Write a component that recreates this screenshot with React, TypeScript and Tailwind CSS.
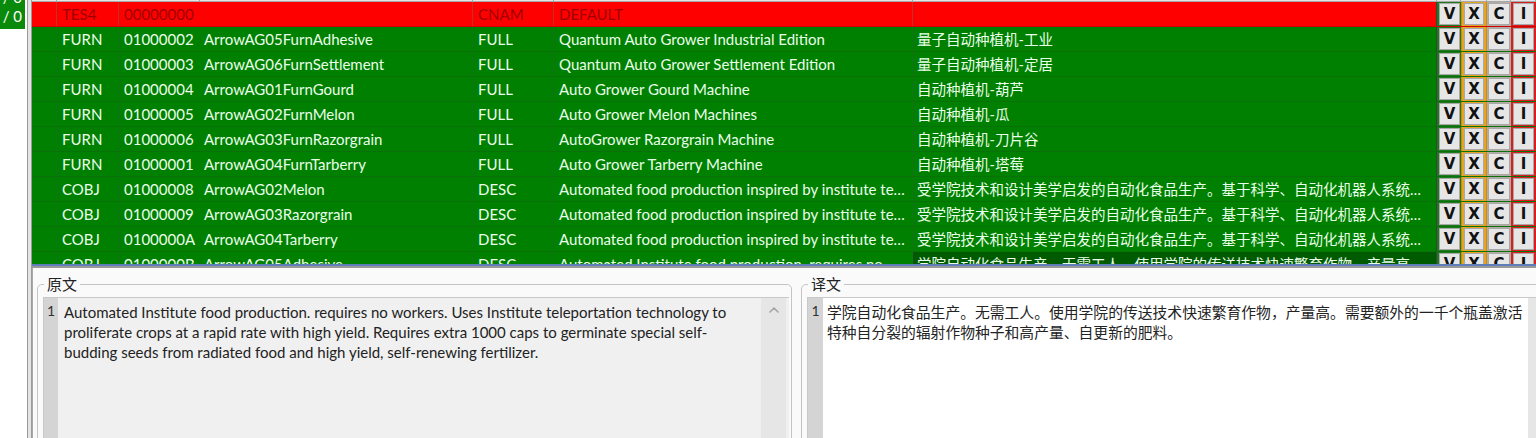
import React from "react";
import { ChevronUp } from "lucide-react";

type Row = { sig: string; fid: string; edid: string; fld: string; src: string; dst: string; red?: boolean; sel?: boolean };

const DESC_EN = "Automated food production inspired by institute technology and design aesthetics.";
const DESC_ZH = "受学院技术和设计美学启发的自动化食品生产。基于科学、自动化机器人系统和高效的生产方式。";

const rows: Row[] = [
  { sig: "TES4", fid: "00000000", edid: "", fld: "CNAM", src: "DEFAULT", dst: "", red: true },
  { sig: "FURN", fid: "01000002", edid: "ArrowAG05FurnAdhesive", fld: "FULL", src: "Quantum Auto Grower Industrial Edition", dst: "量子自动种植机-工业" },
  { sig: "FURN", fid: "01000003", edid: "ArrowAG06FurnSettlement", fld: "FULL", src: "Quantum Auto Grower Settlement Edition", dst: "量子自动种植机-定居" },
  { sig: "FURN", fid: "01000004", edid: "ArrowAG01FurnGourd", fld: "FULL", src: "Auto Grower Gourd Machine", dst: "自动种植机-葫芦" },
  { sig: "FURN", fid: "01000005", edid: "ArrowAG02FurnMelon", fld: "FULL", src: "Auto Grower Melon Machines", dst: "自动种植机-瓜" },
  { sig: "FURN", fid: "01000006", edid: "ArrowAG03FurnRazorgrain", fld: "FULL", src: "AutoGrower Razorgrain Machine", dst: "自动种植机-刀片谷" },
  { sig: "FURN", fid: "01000001", edid: "ArrowAG04FurnTarberry", fld: "FULL", src: "Auto Grower Tarberry Machine", dst: "自动种植机-塔莓" },
  { sig: "COBJ", fid: "01000008", edid: "ArrowAG02Melon", fld: "DESC", src: DESC_EN, dst: DESC_ZH },
  { sig: "COBJ", fid: "01000009", edid: "ArrowAG03Razorgrain", fld: "DESC", src: DESC_EN, dst: DESC_ZH },
  { sig: "COBJ", fid: "0100000A", edid: "ArrowAG04Tarberry", fld: "DESC", src: DESC_EN, dst: DESC_ZH },
  { sig: "COBJ", fid: "0100000B", edid: "ArrowAG05Adhesive", fld: "DESC", src: "Automated Institute food production. requires no workers. Uses Institute teleportation", dst: "学院自动化食品生产。无需工人。使用学院的传送技术快速繁育作物，产量高。需要额外的一千个瓶盖", sel: true },
];

const GRID = "grid grid-cols-[25px_62px_81px_273px_81px_359px_524px_24px_26px_24px_25px]";
const FONT = { fontFamily: "Lato, 'Noto Sans CJK SC', sans-serif" } as React.CSSProperties;

function Btn({ ch }: { ch: string }) {
  return (
    <div
      className="w-full h-full bg-[#e6e6e6] border border-[#a8a8a8] flex items-center justify-center text-[15px] font-bold text-[#111] leading-none"
      style={{ fontFamily: "'DejaVu Sans', Verdana, sans-serif" }}
    >
      {ch}
    </div>
  );
}

function TableRow({ r }: { r: Row }) {
  const bg = r.red ? "bg-[#ff0000] text-[#a00000]" : "bg-[#008000] text-[#eaffea]";
  const line = r.red ? "border-[#c03030]" : "border-[#17701a]";
  return (
    <div className={`${GRID} h-[25px] text-[15px] leading-[25px] border-b ${r.red ? "border-[#d00000]" : "border-[#0a700a]"}`}>
      <div className={`${bg} border-r ${line}`} />
      <div className={`${bg} border-r ${line} pl-[5px] truncate`}>{r.sig}</div>
      <div className={`${bg} pl-[5px] truncate`}>{r.fid}</div>
      <div className={`${bg} border-r ${line} pl-[4px] truncate`}>{r.edid}</div>
      <div className={`${bg} border-r ${line} pl-[5px] truncate`}>{r.fld}</div>
      <div className={`${bg} border-r ${line} pl-[5px] pr-[4px] truncate`}>{r.src}</div>
      <div className={`${r.sel ? "bg-[#005a00] text-[#eaffea]" : bg} border-r border-[#404040] pl-[4px] pr-[2px] truncate text-[14.5px]`}>{r.dst}</div>
      <div className="bg-[#1e7a1e] pl-[2px] pr-[1px] py-[1px]"><Btn ch="V" /></div>
      <div className="bg-[#e5a424] border-x border-[#d08a10] px-[2px] py-[1px]"><Btn ch="X" /></div>
      <div className="bg-[#b4aca4] px-[1px] py-[1px]"><Btn ch="C" /></div>
      <div className="bg-[#d81e1e] px-[2px] py-[1px]"><Btn ch="I" /></div>
    </div>
  );
}

function Header() {
  const cells = ["", "", "", "", "", "", "", "", "", "", ""];
  return (
    <div className={`${GRID} h-[25px] -mt-[23px] bg-[#e6e6e6] border-b border-[#a8a8a8]`}>
      {cells.map((_, i) => (
        <div key={i} className={i === 1 ? "" : "border-r border-[#a0a0a0]"} />
      ))}
    </div>
  );
}

export default function App() {
  return (
    <div className="w-[1536px] h-[438px] overflow-hidden bg-white flex" style={FONT}>
      {/* left strip */}
      <div className="w-[27px] shrink-0 bg-white">
        <div className="w-[25px] h-[29px] bg-[#0a8a0a] text-white text-[15px] leading-[17px] overflow-hidden flex flex-col items-end pr-[3px]">
          <div className="-mt-[11px]">/ 0</div>
          <div className="mt-[2px]">/ 0</div>
        </div>
      </div>
      {/* frame */}
      <div className="w-[5px] shrink-0 bg-[#e4e4e4] border-x border-[#9a9a9a]" />
      {/* main */}
      <div className="w-[1504px] shrink-0 flex flex-col">
        <div className="h-[264px] overflow-hidden bg-[#008000] shrink-0">
          <Header />
          {rows.map((r, i) => (
            <TableRow key={i} r={r} />
          ))}
        </div>
        <div className="h-[2px] bg-[#5c7fb8] shrink-0" />
        <div className="h-[2px] bg-[#9a9a9a] shrink-0" />
        <div className="flex-1 flex bg-[#fafafa] border-l border-[#a8a8a8] pl-[4px] pt-[7px] gap-[9px] overflow-hidden">
          {/* source */}
          <fieldset className="w-[755px] shrink-0 border border-[#c4c4c4] rounded-[5px] pl-[5px] pr-[2px] flex flex-col min-h-[200px]">
            <legend className="ml-[1px] px-[3px] text-[15px] leading-[18px] text-[#222]">原文</legend>
            <div className="mt-[4px] flex-1 flex border-t border-l border-[#c8c8c8] bg-[#f0f0f0]">
              <div className="w-[14px] bg-[#d4d4d4] text-[14px] text-[#333] text-center pt-[3px] leading-[20px]">1</div>
              <div className="flex-1 min-w-0 pl-[6px] pt-[4px] text-[15px] leading-[20px] text-[#222] whitespace-nowrap overflow-hidden">
                <div>Automated Institute food production. requires no workers. Uses Institute teleportation technology to</div>
                <div>proliferate crops at a rapid rate with high yield. Requires extra 1000 caps to germinate special self-</div>
                <div>budding seeds from radiated food and high yield, self-renewing fertilizer.</div>
              </div>
              <div className="w-[25px] shrink-0 bg-[#e6e6e6] flex justify-center pt-[4px]">
                <ChevronUp size={16} strokeWidth={2.5} className="text-[#a6a6a6]" />
              </div>
              <div className="w-[3px] shrink-0" />
            </div>
          </fieldset>
          {/* translation */}
          <fieldset className="w-[755px] shrink-0 border border-[#c4c4c4] rounded-[5px] pl-[5px] pr-[2px] flex flex-col min-h-[200px]">
            <legend className="ml-[1px] px-[3px] text-[15px] leading-[18px] text-[#222]">译文</legend>
            <div className="mt-[4px] flex-1 flex border-t border-l border-[#c8c8c8] bg-white">
              <div className="w-[15px] shrink-0 bg-[#d4d4d4] text-[14px] text-[#333] text-center pt-[3px] leading-[20px]">1</div>
              <div className="flex-1 min-w-0 pl-[4px] pt-[4px] text-[14.8px] leading-[20px] text-[#222] whitespace-nowrap overflow-hidden">
                <div>学院自动化食品生产。无需工人。使用学院的传送技术快速繁育作物，产量高。需要额外的一千个瓶盖激活</div>
                <div>特种自分裂的辐射作物种子和高产量、自更新的肥料。</div>
              </div>
              <div className="w-[25px] shrink-0 bg-[#e6e6e6]" />
            </div>
          </fieldset>
        </div>
      </div>
    </div>
  );
}
